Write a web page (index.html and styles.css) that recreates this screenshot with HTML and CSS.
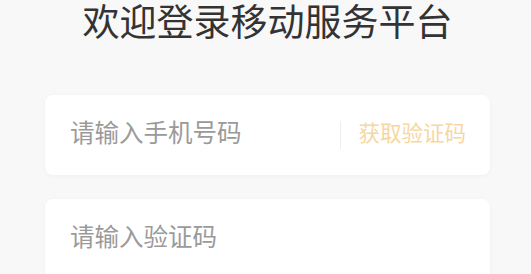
FILE: index.html
```html
<!DOCTYPE html>
<html lang="zh-CN">
<head>
    <meta charset="UTF-8">
    <meta name="viewport" content="width=device-width, initial-scale=1.0">
    <title>登录</title>
    <link rel="stylesheet" href="styles.css">
</head>
<body>
    <div class="login">
        <h1 class="title">欢迎登录移动服务平台</h1>

        <form class="login-form">
            <div class="field">
                <input type="tel" class="field-input" placeholder="请输入手机号码">
                <span class="divider"></span>
                <button type="button" class="code-btn">获取验证码</button>
            </div>

            <div class="field">
                <input type="text" class="field-input" placeholder="请输入验证码">
            </div>
        </form>
    </div>
</body>
</html>
```

FILE: styles.css
```css
* {
    margin: 0;
    padding: 0;
    box-sizing: border-box;
}

body {
    font-family: "Noto Sans CJK SC", "Noto Sans", sans-serif;
    background: #f8f8f8;
    color: #333;
}

.login {
    padding: 0 41px 0 45px;
}

.title {
    font-size: 37px;
    font-weight: 400;
    line-height: 40px;
    text-align: center;
    color: #333;
}

.login-form {
    display: flex;
    flex-direction: column;
    gap: 24px;
    margin-top: 55px;
}

.field {
    display: flex;
    align-items: center;
    height: 80px;
    background: #fff;
    border-radius: 8px;
    box-shadow: 0 1px 4px rgba(0, 0, 0, 0.04);
    padding: 0 24px 8px 25px;
}

.field-input {
    flex: 1;
    min-width: 0;
    border: none;
    outline: none;
    background: transparent;
    font-family: inherit;
    font-size: 24.5px;
    color: #333;
}

.field-input::placeholder {
    color: #9a9a9a;
}

.divider {
    width: 1px;
    height: 28px;
    background: #eeeeee;
    margin: 8px 17px 0 0;
}

.code-btn {
    border: none;
    background: transparent;
    font-family: inherit;
    font-size: 21.5px;
    color: #f6d7a2;
    cursor: pointer;
}
```
